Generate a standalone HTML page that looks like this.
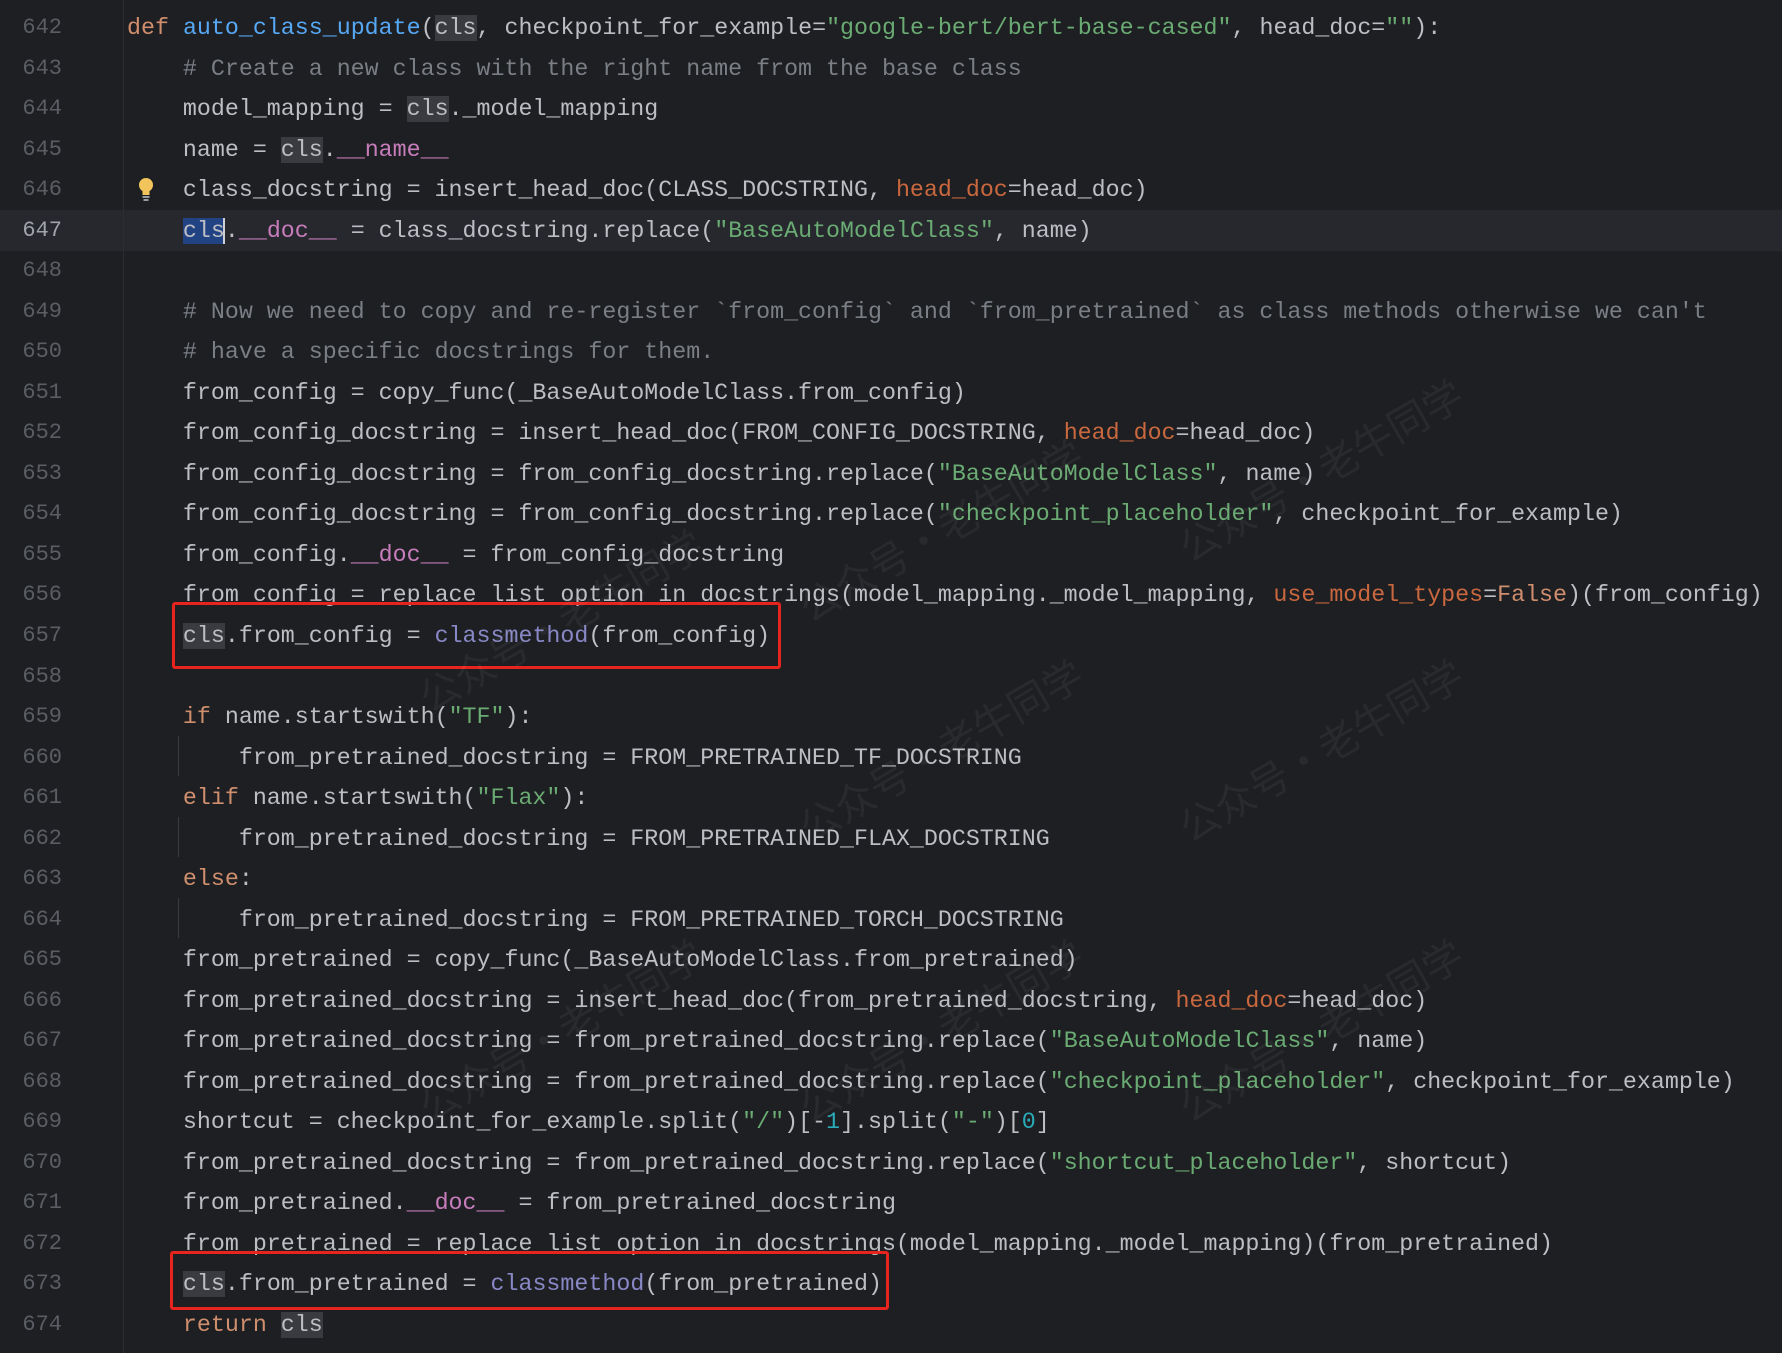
<!DOCTYPE html>
<html><head><meta charset="utf-8">
<style>
html,body{margin:0;padding:0;background:#1e1f22;width:1782px;height:1353px;overflow:hidden;position:relative}
.ln{position:absolute;left:0;width:62px;text-align:right;font-family:"Liberation Mono",monospace;font-size:22px;color:#5a5d63;height:40.52px;line-height:40.52px}
.cl{position:absolute;left:127px;white-space:pre;font-family:"Liberation Mono",monospace;font-size:23.3px;color:#bcbec4;height:40.52px;line-height:40.52px}
.k{color:#cf8e6d}.f{color:#56a8f5}.s{color:#6aab73}.c{color:#7a7e85}.m{color:#c77dbb}.p{color:#c9683f}.cm{color:#8888c6}.n{color:#2aacb8}
.h{background:#393b40}
.sel{background:#214283}
.box{position:absolute;border:3.5px solid #e8241f;border-radius:3px}
.g{position:absolute;width:1px;background:#393b40}
.wm{position:absolute;font-family:"Noto Sans CJK SC",sans-serif;font-size:40px;color:rgba(255,255,255,0.05);transform:rotate(-30deg);white-space:nowrap}
</style></head><body>
<div style="position:absolute;left:0;top:210px;width:1782px;height:40.5px;background:#26282e"></div>
<div style="position:absolute;left:123px;top:0;width:1px;height:1353px;background:#2b2d30"></div>
<div class="g" style="left:178px;top:736px;height:40px"></div>
<div class="g" style="left:178px;top:817px;height:40px"></div>
<div class="g" style="left:178px;top:898px;height:40px"></div>

<div id="L"></div>
<script>
var lines=[
'<span class="k">def</span> <span class="f">auto_class_update</span>(<span class="h">cls</span>, checkpoint_for_example=<span class="s">"google-bert/bert-base-cased"</span>, head_doc=<span class="s">""</span>):',
'    <span class="c"># Create a new class with the right name from the base class</span>',
'    model_mapping = <span class="h">cls</span>._model_mapping',
'    name = <span class="h">cls</span>.<span class="m">__name__</span>',
'    class_docstring = insert_head_doc(CLASS_DOCSTRING, <span class="p">head_doc</span>=head_doc)',
'    <span class="sel">cls</span><span style="border-left:2px solid #ced0d6;margin-left:-2px"></span>.<span class="m">__doc__</span> = class_docstring.replace(<span class="s">"BaseAutoModelClass"</span>, name)',
'',
'    <span class="c"># Now we need to copy and re-register `from_config` and `from_pretrained` as class methods otherwise we can\'t</span>',
'    <span class="c"># have a specific docstrings for them.</span>',
'    from_config = copy_func(_BaseAutoModelClass.from_config)',
'    from_config_docstring = insert_head_doc(FROM_CONFIG_DOCSTRING, <span class="p">head_doc</span>=head_doc)',
'    from_config_docstring = from_config_docstring.replace(<span class="s">"BaseAutoModelClass"</span>, name)',
'    from_config_docstring = from_config_docstring.replace(<span class="s">"checkpoint_placeholder"</span>, checkpoint_for_example)',
'    from_config.<span class="m">__doc__</span> = from_config_docstring',
'    from_config = replace_list_option_in_docstrings(model_mapping._model_mapping, <span class="p">use_model_types</span>=<span class="k">False</span>)(from_config)',
'    <span class="h">cls</span>.from_config = <span class="cm">classmethod</span>(from_config)',
'',
'    <span class="k">if</span> name.startswith(<span class="s">"TF"</span>):',
'        from_pretrained_docstring = FROM_PRETRAINED_TF_DOCSTRING',
'    <span class="k">elif</span> name.startswith(<span class="s">"Flax"</span>):',
'        from_pretrained_docstring = FROM_PRETRAINED_FLAX_DOCSTRING',
'    <span class="k">else</span>:',
'        from_pretrained_docstring = FROM_PRETRAINED_TORCH_DOCSTRING',
'    from_pretrained = copy_func(_BaseAutoModelClass.from_pretrained)',
'    from_pretrained_docstring = insert_head_doc(from_pretrained_docstring, <span class="p">head_doc</span>=head_doc)',
'    from_pretrained_docstring = from_pretrained_docstring.replace(<span class="s">"BaseAutoModelClass"</span>, name)',
'    from_pretrained_docstring = from_pretrained_docstring.replace(<span class="s">"checkpoint_placeholder"</span>, checkpoint_for_example)',
'    shortcut = checkpoint_for_example.split(<span class="s">"/"</span>)[-<span class="n">1</span>].split(<span class="s">"-"</span>)[<span class="n">0</span>]',
'    from_pretrained_docstring = from_pretrained_docstring.replace(<span class="s">"shortcut_placeholder"</span>, shortcut)',
'    from_pretrained.<span class="m">__doc__</span> = from_pretrained_docstring',
'    from_pretrained = replace_list_option_in_docstrings(model_mapping._model_mapping)(from_pretrained)',
'    <span class="h">cls</span>.from_pretrained = <span class="cm">classmethod</span>(from_pretrained)',
'    <span class="k">return</span> <span class="h">cls</span>'
];
var h='';
for(var i=0;i<lines.length;i++){
 var t=(8.2+i*40.52).toFixed(2);
 var col=(i==5)?'color:#a1a3ab;':'';
 h+='<div class="ln" style="top:'+t+'px;'+col+'">'+(642+i)+'</div>';
 h+='<div class="cl" style="top:'+t+'px">'+lines[i]+'</div>';
}
document.getElementById('L').innerHTML=h;
</script>
<svg style="position:absolute;left:137px;top:177px" width="18" height="26" viewBox="0 0 18 26">
<circle cx="9" cy="8" r="7" fill="#f2c55c"/><rect x="5.5" y="12" width="7" height="6" fill="#f2c55c"/>
<rect x="5.5" y="19" width="7" height="2" fill="#9a9ca2"/><rect x="6.5" y="22" width="5" height="2" fill="#9a9ca2"/>
</svg>
<div class="box" style="left:172px;top:602px;width:603px;height:61px"></div>
<div class="box" style="left:170px;top:1251px;width:713px;height:53px"></div>

<div class="wm" style="left:400px;top:590px">公众号·老牛同学</div>
<div class="wm" style="left:780px;top:500px">公众号·老牛同学</div>
<div class="wm" style="left:1160px;top:440px">公众号·老牛同学</div>
<div class="wm" style="left:780px;top:720px">公众号·老牛同学</div>
<div class="wm" style="left:1160px;top:720px">公众号·老牛同学</div>
<div class="wm" style="left:400px;top:1000px">公众号·老牛同学</div>
<div class="wm" style="left:780px;top:1000px">公众号·老牛同学</div>
<div class="wm" style="left:1160px;top:1000px">公众号·老牛同学</div>
</body></html>
